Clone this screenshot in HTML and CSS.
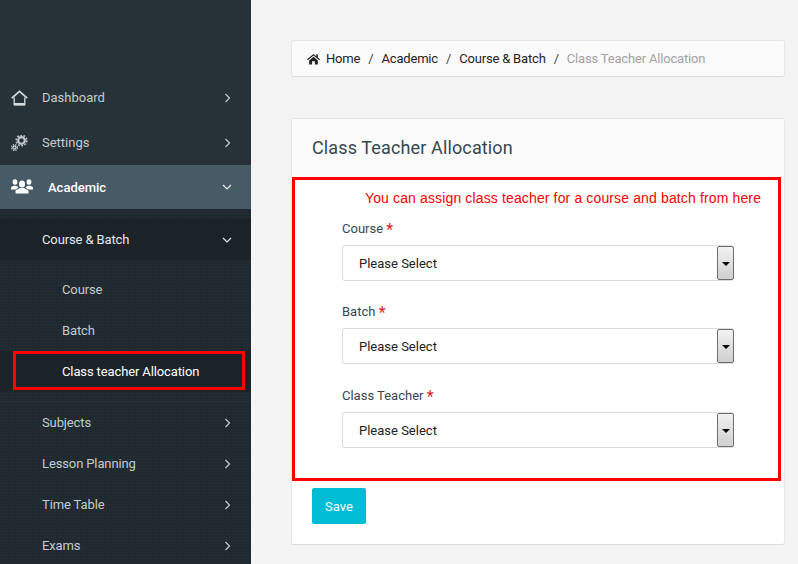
FILE: index.html
```html
<!DOCTYPE html>
<html lang="en">
<head>
<meta charset="utf-8">
<title>Class Teacher Allocation</title>
<link rel="stylesheet" href="styles.css">
</head>
<body>
<div class="app">
  <aside class="sidebar">
    <nav class="menu">
      <a class="item">
        <svg class="ico" viewBox="0 0 17 16"><path d="M.8 8.200 8.500 1.400l7.700 6.800" fill="none" stroke="#d5dadc" stroke-width="1.700"/><path d="M3.200 7.500v7h10.600v-7" fill="none" stroke="#d5dadc" stroke-width="1.300"/><path d="M3 13h11v2.500H3z" fill="#d5dadc"/></svg>
        <span class="label">Dashboard</span>
        <svg class="chev" viewBox="0 0 8 10"><path d="M1.500 1l4 4-4 4" fill="none" stroke="currentColor" stroke-width="1.200"/></svg>
      </a>
      <a class="item">
        <svg class="ico" viewBox="0 0 17 16"><circle cx="10.500" cy="5.500" r="3.300" fill="none" stroke="#c6cccf" stroke-width="2.200"/><circle cx="10.500" cy="5.500" r="5.300" fill="none" stroke="#c6cccf" stroke-width="1.600" stroke-dasharray="1.700 1.600"/><circle cx="3.500" cy="12.500" r="1.500" fill="none" stroke="#c6cccf" stroke-width="1.400"/><circle cx="3.500" cy="12.500" r="3" fill="none" stroke="#c6cccf" stroke-width="1.200" stroke-dasharray="1.300 1.100"/></svg>
        <span class="label">Settings</span>
        <svg class="chev" viewBox="0 0 8 10"><path d="M1.500 1l4 4-4 4" fill="none" stroke="currentColor" stroke-width="1.200"/></svg>
      </a>
      <a class="item active">
        <svg class="ico ico-wide" viewBox="0 0 22 16"><g fill="#fff"><ellipse cx="4" cy="3" rx="2.400" ry="2.800"/><ellipse cx="18" cy="3" rx="2.400" ry="2.800"/><path d="M0 10.500V8.700c0-1 2-1.400 2.800-2h2.400c.5.500 1.300.9 2.300 1.300L5 10.500zM22 10.500V8.700c0-1-2-1.400-2.800-2h-2.400c-.5.500-1.300.9-2.300 1.300l2.500 2.500z"/><ellipse cx="11" cy="5" rx="3" ry="3.600"/><path d="M4.500 14.500v-2.600c0-1.300 3-1.900 4.500-3h4c1.500 1.100 4.500 1.700 4.500 3v2.600z"/></g></svg>
        <span class="label">Academic</span>
        <svg class="chev" viewBox="0 0 10 8"><path d="M1 2l4 4 4-4" fill="none" stroke="currentColor" stroke-width="1.200"/></svg>
      </a>
      <div class="sub">
        <a class="subhead">
          <span class="label">Course &amp; Batch</span>
          <svg class="chev" viewBox="0 0 10 8"><path d="M1 2l4 4 4-4" fill="none" stroke="currentColor" stroke-width="1.200"/></svg>
        </a>
        <div class="leafs">
          <a class="leaf">Course</a>
          <a class="leaf">Batch</a>
          <a class="leaf current">Class teacher Allocation</a>
        </div>
        <a class="subitem"><span class="label">Subjects</span><svg class="chev" viewBox="0 0 8 10"><path d="M1.500 1l4 4-4 4" fill="none" stroke="currentColor" stroke-width="1.200"/></svg></a>
        <a class="subitem"><span class="label">Lesson Planning</span><svg class="chev" viewBox="0 0 8 10"><path d="M1.500 1l4 4-4 4" fill="none" stroke="currentColor" stroke-width="1.200"/></svg></a>
        <a class="subitem"><span class="label">Time Table</span><svg class="chev" viewBox="0 0 8 10"><path d="M1.500 1l4 4-4 4" fill="none" stroke="currentColor" stroke-width="1.200"/></svg></a>
        <a class="subitem"><span class="label">Exams</span><svg class="chev" viewBox="0 0 8 10"><path d="M1.500 1l4 4-4 4" fill="none" stroke="currentColor" stroke-width="1.200"/></svg></a>
      </div>
    </nav>
  </aside>
  <main class="main">
    <div class="crumbs">
      <svg class="home" viewBox="0 0 14 12"><path d="M7 .5 0 6.300l.8 1L7 2.200l6.200 5.100.8-1-2.300-1.900V1h-1.700v2L7 .5zM2.300 7.600V12h3.200V8.500h3V12h3.200V7.600L7 3.700z" fill="#222"/></svg>
      <a>Home</a><span class="sep">/</span><a>Academic</a><span class="sep">/</span><a>Course &amp; Batch</a><span class="sep">/</span><span class="now">Class Teacher Allocation</span>
    </div>
    <section class="card">
      <h1 class="card-title">Class Teacher Allocation</h1>
      <div class="card-body">
        <p class="note">You can assign class teacher for a course and batch from here</p>
        <div class="field">
          <label class="field-label">Course <b>*</b></label>
          <div class="select"><span>Please Select</span><i class="drop"></i></div>
        </div>
        <div class="field">
          <label class="field-label">Batch <b>*</b></label>
          <div class="select"><span>Please Select</span><i class="drop"></i></div>
        </div>
        <div class="field">
          <label class="field-label">Class Teacher <b>*</b></label>
          <div class="select"><span>Please Select</span><i class="drop"></i></div>
        </div>
      </div>
      <div class="card-foot"><button class="save" type="button">Save</button></div>
    </section>
  </main>
</div>
<div class="mark mark-form"></div>
<div class="mark mark-menu"></div>
</body>
</html>
```
FILE: styles.css
```css
* { box-sizing: border-box; }
html, body { margin: 0; height: 564px; overflow: hidden; }
body { position: relative; font-family: Roboto, "Liberation Sans", sans-serif; font-size: 13px; background: #f4f4f4; color: #333; }
.app { display: flex; height: 564px; overflow: hidden; }

.sidebar { width: 251px; flex: none; background: #263238; padding-top: 75px; color: #c3cbce; }
.menu { display: flex; flex-direction: column; }
.menu a { display: flex; align-items: center; }
.label { flex: 1; }
.chev { width: 8px; height: 10px; flex: none; color: #c3cbce; margin-right: -1px; }

.item { height: 45px; padding: 0 20px 0 11px; }
.item.active { height: 44px; background: #475b67; color: #fff; font-weight: 500; }
.item.active .chev { width: 10px; height: 8px; color: #e8ecee; margin-right: -1px; }
.ico { width: 17px; height: 16px; flex: none; margin-right: 14px; }
.ico-wide { width: 22px; margin-right: 15px; }

.sub { background-color: #1f292f; background-image: radial-gradient(#283339 0.6px, transparent 0.7px); background-size: 3px 3px; padding-top: 10px; letter-spacing: -0.12px; }
.subhead { height: 41px; padding: 0 20px 0 42px; background: #1b2328; color: #e4e8ea; }
.subhead .chev { width: 10px; height: 8px; color: #e4e8ea; margin-right: -1px; }
.leafs { padding: 9px 0 9px; border-bottom: 1px solid #263037; }
.leaf { height: 41px; padding-left: 62px; }
.leaf.current { color: #fff; background: #1b2328; }
.subitem { height: 41px; padding: 0 20px 0 42px; }

.main { flex: 1; padding: 40px 13px 0 40px; min-width: 0; }
.crumbs { display: flex; align-items: center; height: 37px; padding-left: 15px; background: #fafafa; border: 1px solid #e6e6e6; border-bottom-color: #dcdcdc; border-radius: 3px; color: #222; white-space: nowrap; letter-spacing: -0.18px; }
.home { width: 13px; height: 12px; margin-right: 6px; }
.sep { margin: 0 8px; color: #444; }
.now { color: #a3a3a3; }

.card { margin-top: 41px; height: 427px; background: #fff; border: 1px solid #e6e6e6; border-bottom-color: #dcdcdc; border-radius: 3px; }
.card-title { margin: 0; height: 58px; line-height: 58px; padding-left: 20px; font-size: 18px; font-weight: 400; letter-spacing: 0.13px; color: #37474f; background: #fafafa; }
.card-body { height: 311px; padding: 0 50px; }
.note { margin: 0; height: 41.800px; padding: 12px 0 0 23px; font-family: "Liberation Sans", Arial, sans-serif; font-size: 14px; line-height: 18px; letter-spacing: 0.135px; color: #f00; white-space: nowrap; }
.field { height: 83.500px; }
.field-label { display: block; height: 26.200px; line-height: 18px; color: #37474f; }
.field-label b { font-weight: 400; font-size: 16px; color: #e02020; position: relative; top: 2px; }
.select { position: relative; display: flex; align-items: center; height: 36px; padding: 0.2px 0 0 16px; background: #fff; border: 1px solid #dcdcdc; border-radius: 3px; color: #222; }
.drop { position: absolute; right: -1px; top: 0; bottom: 0; width: 17px; background: linear-gradient(#f2f2f2, #cfcfcf); border: 1px solid #6d6d6d; border-radius: 2px; }
.drop::after { content: ""; position: absolute; left: 4px; top: 15px; border: 4px solid transparent; border-top: 4px solid #000; border-bottom: 0; }
.card-foot { padding: 0 20px; }
.save { display: block; width: 54px; height: 36px; padding: 0; border: 0; border-radius: 2px; background: #00bcd4; color: #fff; font: 400 13px Roboto, sans-serif; }

/* Annotation frames drawn over the screenshot */
.mark { position: absolute; border: 3px solid #f00; pointer-events: none; }
.mark-form { left: 292px; top: 177px; width: 489px; height: 304px; }
.mark-menu { left: 13px; top: 351px; width: 232px; height: 39px; }
```
